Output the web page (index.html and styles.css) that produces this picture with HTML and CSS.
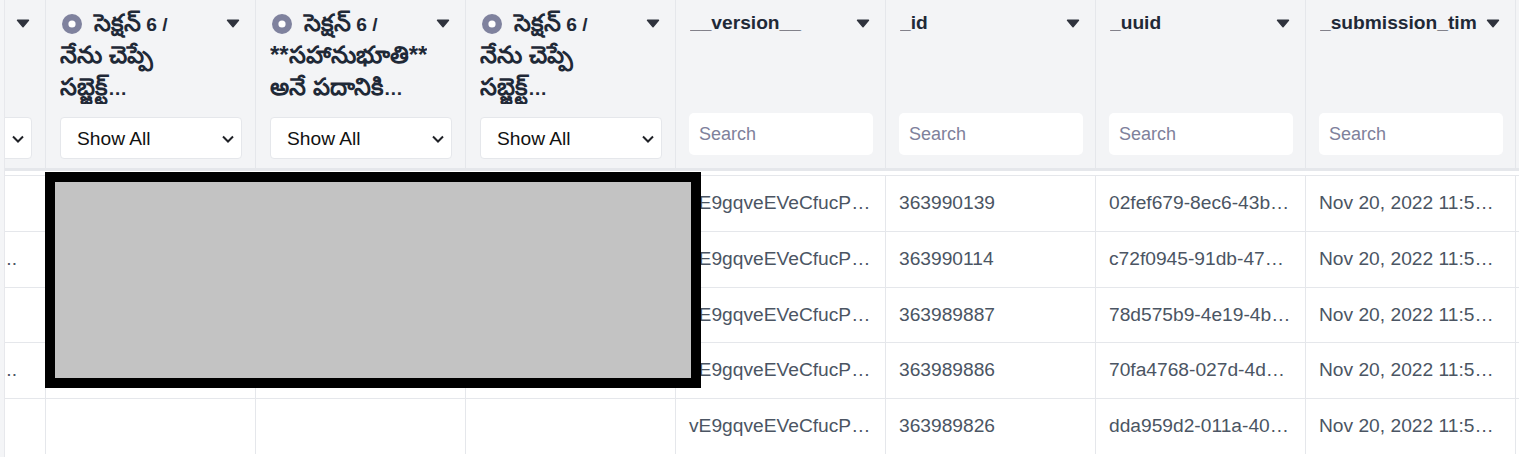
FILE: index.html
```html
<!DOCTYPE html>
<html lang="te">
<head>
    <meta charset="UTF-8">
    <meta name="viewport" content="width=device-width, initial-scale=1.0">
    <title>Submissions</title>
    <link rel="stylesheet" href="styles.css">
</head>
<body>
    <div class="grid">
        <!-- Ombra della colonna fissa a sinistra -->
        <div class="edge-shadow"></div>

        <div class="table">
            <!-- Intestazione con filtri -->
            <div class="head">
                <div class="th">
                    <div class="th-top">
                        <div class="th-title">
                            <svg class="q-icon" viewBox="0 0 20 20"><circle cx="10" cy="10" r="10" fill="#7f829e"/><circle cx="10" cy="10" r="3.6" fill="#fff"/></svg><span class="te">సెక్షన్</span> 5 /
                        </div>
                        <svg class="caret" viewBox="0 0 14 9"><path d="M1.5 1.2h11L7 7.8z" fill="#2f333d" stroke="#2f333d" stroke-width="1.4" stroke-linejoin="round"/></svg>
                    </div>
                    <div class="filter-select">
                        <select><option>Show All</option></select>
                        <svg class="chev" viewBox="0 0 12 8"><path d="M1 1.5l5 5 5-5" fill="none" stroke="#1f2126" stroke-width="2"/></svg>
                    </div>
                </div>
                <div class="th">
                    <div class="th-top">
                        <div class="th-title">
                            <svg class="q-icon" viewBox="0 0 20 20"><circle cx="10" cy="10" r="10" fill="#7f829e"/><circle cx="10" cy="10" r="3.6" fill="#fff"/></svg><span class="te">సెక్షన్</span> 6 /<br><span class="te">నేను చెప్పే<br>సబ్జెక్ట్<br>గురించి నాకు బాగా తెలుసు</span>
                        </div>
                        <svg class="caret" viewBox="0 0 14 9"><path d="M1.5 1.2h11L7 7.8z" fill="#2f333d" stroke="#2f333d" stroke-width="1.4" stroke-linejoin="round"/></svg>
                    </div>
                    <div class="filter-select">
                        <select><option>Show All</option></select>
                        <svg class="chev" viewBox="0 0 12 8"><path d="M1 1.5l5 5 5-5" fill="none" stroke="#1f2126" stroke-width="2"/></svg>
                    </div>
                </div>
                <div class="th">
                    <div class="th-top">
                        <div class="th-title">
                            <svg class="q-icon" viewBox="0 0 20 20"><circle cx="10" cy="10" r="10" fill="#7f829e"/><circle cx="10" cy="10" r="3.6" fill="#fff"/></svg><span class="te">సెక్షన్</span> 6 /<br><span class="te">**సహానుభూతి**<br>అనే పదానికి<br>అర్థం నాకు తెలుసు</span>
                        </div>
                        <svg class="caret" viewBox="0 0 14 9"><path d="M1.5 1.2h11L7 7.8z" fill="#2f333d" stroke="#2f333d" stroke-width="1.4" stroke-linejoin="round"/></svg>
                    </div>
                    <div class="filter-select">
                        <select><option>Show All</option></select>
                        <svg class="chev" viewBox="0 0 12 8"><path d="M1 1.5l5 5 5-5" fill="none" stroke="#1f2126" stroke-width="2"/></svg>
                    </div>
                </div>
                <div class="th">
                    <div class="th-top">
                        <div class="th-title">
                            <svg class="q-icon" viewBox="0 0 20 20"><circle cx="10" cy="10" r="10" fill="#7f829e"/><circle cx="10" cy="10" r="3.6" fill="#fff"/></svg><span class="te">సెక్షన్</span> 6 /<br><span class="te">నేను చెప్పే<br>సబ్జెక్ట్<br>పట్ల నాకు ఆసక్తి ఉంది</span>
                        </div>
                        <svg class="caret" viewBox="0 0 14 9"><path d="M1.5 1.2h11L7 7.8z" fill="#2f333d" stroke="#2f333d" stroke-width="1.4" stroke-linejoin="round"/></svg>
                    </div>
                    <div class="filter-select">
                        <select><option>Show All</option></select>
                        <svg class="chev" viewBox="0 0 12 8"><path d="M1 1.5l5 5 5-5" fill="none" stroke="#1f2126" stroke-width="2"/></svg>
                    </div>
                </div>
                <div class="th">
                    <div class="th-top">
                        <div class="th-title">__version__</div>
                        <svg class="caret" viewBox="0 0 14 9"><path d="M1.5 1.2h11L7 7.8z" fill="#2f333d" stroke="#2f333d" stroke-width="1.4" stroke-linejoin="round"/></svg>
                    </div>
                    <input class="filter-search" type="text" placeholder="Search">
                </div>
                <div class="th">
                    <div class="th-top">
                        <div class="th-title">_id</div>
                        <svg class="caret" viewBox="0 0 14 9"><path d="M1.5 1.2h11L7 7.8z" fill="#2f333d" stroke="#2f333d" stroke-width="1.4" stroke-linejoin="round"/></svg>
                    </div>
                    <input class="filter-search" type="text" placeholder="Search">
                </div>
                <div class="th">
                    <div class="th-top">
                        <div class="th-title">_uuid</div>
                        <svg class="caret" viewBox="0 0 14 9"><path d="M1.5 1.2h11L7 7.8z" fill="#2f333d" stroke="#2f333d" stroke-width="1.4" stroke-linejoin="round"/></svg>
                    </div>
                    <input class="filter-search" type="text" placeholder="Search">
                </div>
                <div class="th">
                    <div class="th-top">
                        <div class="th-title">_submission_time</div>
                        <svg class="caret" viewBox="0 0 14 9"><path d="M1.5 1.2h11L7 7.8z" fill="#2f333d" stroke="#2f333d" stroke-width="1.4" stroke-linejoin="round"/></svg>
                    </div>
                    <input class="filter-search" type="text" placeholder="Search">
                </div>
                <div class="th"></div>
            </div>

            <!-- Righe dei dati -->
            <div class="body">
                <div class="tr">
                    <div class="td td-edge"></div>
                    <div class="td"></div><div class="td"></div><div class="td"></div>
                    <div class="td">vE9gqveEVeCfucPhRkT2mWq</div>
                    <div class="td">363990139</div>
                    <div class="td">02fef679-8ec6-43b4-a1c2-5d9e7f0b3a21</div>
                    <div class="td">Nov 20, 2022 11:54 AM</div>
                    <div class="td"></div>
                </div>
                <div class="tr">
                    <div class="td td-edge">Somewhat agree...</div>
                    <div class="td"></div><div class="td"></div><div class="td"></div>
                    <div class="td">vE9gqveEVeCfucPhRkT2mWq</div>
                    <div class="td">363990114</div>
                    <div class="td">c72f0945-91db-47mm-b3e1-0a6f2c8d4e19</div>
                    <div class="td">Nov 20, 2022 11:53 AM</div>
                    <div class="td"></div>
                </div>
                <div class="tr">
                    <div class="td td-edge"></div>
                    <div class="td"></div><div class="td"></div><div class="td"></div>
                    <div class="td">vE9gqveEVeCfucPhRkT2mWq</div>
                    <div class="td">363989887</div>
                    <div class="td">78d575b9-4e19-4b8a-9c0d-7e2f1a3b5c64</div>
                    <div class="td">Nov 20, 2022 11:51 AM</div>
                    <div class="td"></div>
                </div>
                <div class="tr">
                    <div class="td td-edge">Somewhat agree...</div>
                    <div class="td"></div><div class="td"></div><div class="td"></div>
                    <div class="td">vE9gqveEVeCfucPhRkT2mWq</div>
                    <div class="td">363989886</div>
                    <div class="td">70fa4768-027d-4d9e-8b1f-2c3a4d5e6f70</div>
                    <div class="td">Nov 20, 2022 11:51 AM</div>
                    <div class="td"></div>
                </div>
                <div class="tr">
                    <div class="td td-edge"></div>
                    <div class="td"></div><div class="td"></div><div class="td"></div>
                    <div class="td">vE9gqveEVeCfucPhRkT2mWq</div>
                    <div class="td">363989826</div>
                    <div class="td">dda959d2-011a-4098-a7b6-1f2e3d4c5b6a</div>
                    <div class="td">Nov 20, 2022 11:50 AM</div>
                    <div class="td"></div>
                </div>
            </div>
        </div>

        <!-- Area oscurata sopra i dati -->
        <div class="redacted"></div>
    </div>
</body>
</html>
```

FILE: styles.css
```css
body {
    margin: 0;
    background-color: #fff;
    font-family: "Liberation Sans", Arial, "Noto Sans", sans-serif;
    font-size: 19.2px;
}
.grid {
    position: relative;
    width: 100%;
    height: 457px;
    overflow: hidden;
}
.table {
    margin-left: -164px; /* tabella scorsa orizzontalmente */
    display: flex;
    flex-direction: column;
    width: max-content;
}

/* Intestazione */
.head {
    display: flex;
    background-color: #f3f4f6;
    border-bottom: 3px solid #e5e7eb;
    margin-bottom: 4px;
}
.th {
    width: 210px;
    height: 168px;
    flex: none;
    box-sizing: border-box;
    border-right: 1px solid #e5e7eb;
    display: flex;
    flex-direction: column;
}
.th-top {
    display: flex;
    align-items: flex-start;
    gap: 9px;
    padding: 8px 15px 0 14px;
}
.th-title {
    flex: 1;
    min-width: 0;
    font-weight: bold;
    line-height: 30px;
    color: #1f2937;
    display: -webkit-box;
    -webkit-line-clamp: 3;
    -webkit-box-orient: vertical;
    overflow: hidden;
}
.th-title .te {
    font-size: 24px; /* il telugu è più largo nell'originale */
    font-weight: 600;
}
.q-icon {
    width: 20px;
    height: 20px;
    margin: 0 12px 0 2px;
    vertical-align: -3px;
}
.caret {
    flex: none;
    width: 14px;
    height: 9px;
    margin-top: 11px;
}

/* Filtri */
.filter-select {
    position: relative;
    margin: auto 14px 9px;
    height: 42px;
}
.filter-select select {
    -webkit-appearance: none;
    appearance: none;
    width: 182px;
    height: 42px;
    box-sizing: border-box;
    border: 1px solid #e5e7eb;
    border-radius: 4px;
    background-color: #fff;
    padding: 0 0 0 16px;
    font-family: inherit;
    font-size: 19.2px;
    color: #111;
}
.chev {
    position: absolute;
    right: 7px;
    top: 18px;
    width: 12px;
    height: 8px;
    pointer-events: none;
}
.filter-search {
    margin: auto 13px 13px;
    width: 184px;
    height: 42px;
    box-sizing: border-box;
    border: none;
    border-radius: 5px;
    background-color: #fff;
    padding: 0 10px;
    font-family: inherit;
    font-size: 18px;
    outline: none;
}
.filter-search::placeholder {
    color: #7e819b;
}

/* Righe */
.tr {
    display: flex;
    border-top: 1px solid #e5e7eb;
    height: 55.75px;
    box-sizing: border-box;
}
.td {
    width: 210px;
    flex: none;
    box-sizing: border-box;
    border-right: 1px solid #e5e7eb;
    padding: 0 13px;
    line-height: 54.75px;
    color: #4b5563;
    white-space: nowrap;
    overflow: hidden;
    text-overflow: ellipsis;
}
/* colonna tagliata a sinistra: il testo finisce coi puntini */
.td-edge {
    padding-right: 28px;
    text-align: right;
    text-overflow: clip;
}

/* Ombra a sinistra */
.edge-shadow {
    position: absolute;
    left: 0;
    top: 0;
    width: 4px;
    height: 100%;
    background-color: #f4f5f7;
    border-right: 1px solid #e7e8ec;
    z-index: 2;
}

/* Riquadro oscurato */
.redacted {
    position: absolute;
    left: 45px;
    top: 172px;
    width: 656px;
    height: 216px;
    box-sizing: border-box;
    border: 10px solid #000;
    background-color: #c3c3c3;
    z-index: 3;
}
```
